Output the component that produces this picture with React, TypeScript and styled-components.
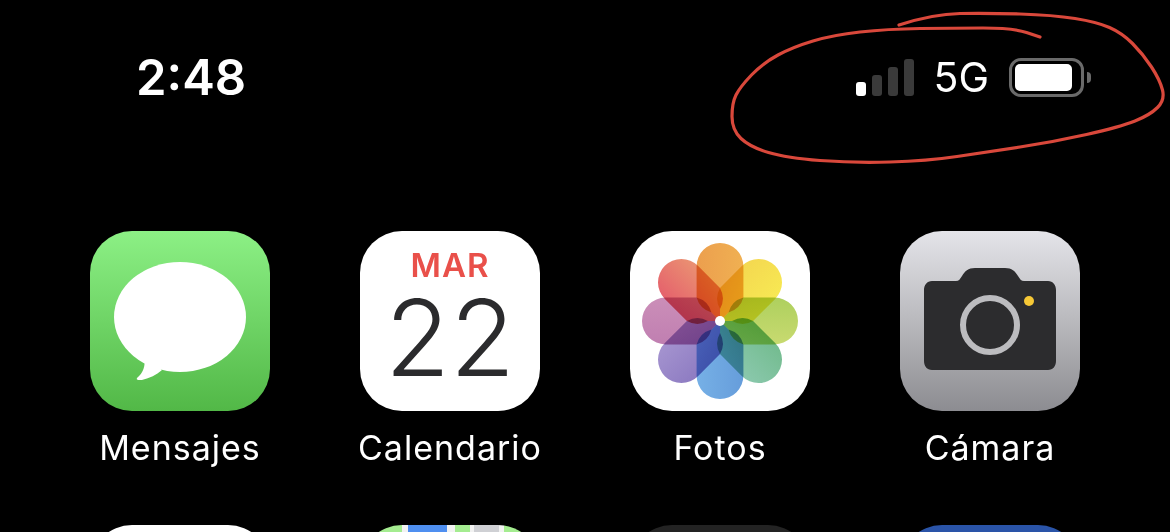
import React from 'react'
import styled, { createGlobalStyle } from 'styled-components'

const GlobalStyle = createGlobalStyle`
  html, body {
    margin: 0;
    padding: 0;
    background: #000;
  }
`

const petals = [
  { angle: 0, from: '#ec9f4e', to: '#f0b052' },
  { angle: 45, from: '#f4d850', to: '#f7e853' },
  { angle: 90, from: '#aed05e', to: '#c8da70' },
  { angle: 135, from: '#74bc90', to: '#8ac8ac' },
  { angle: 180, from: '#669ddb', to: '#76b0e6' },
  { angle: 225, from: '#8e7cc2', to: '#a493cf' },
  { angle: 270, from: '#c07fb1', to: '#cb8eb8' },
  { angle: 315, from: '#e5626c', to: '#ea9172' },
]

const scribble = [
  [899, 25], [933, 14], [987, 13], [1053, 15], [1097, 22], [1122, 33], [1143, 54], [1160, 80],
  [1165, 100], [1150, 115], [1120, 127], [1053, 142], [987, 152], [927, 161], [853, 163],
  [787, 158], [750, 147], [732, 130], [732, 103], [740, 87], [763, 63], [793, 47], [833, 35],
  [887, 29], [953, 28], [1013, 28], [1040, 37],
]

// smooth the hand drawn line through the midpoints
const smoothPath = (pts: number[][]) => {
  let d = `M${pts[0][0]} ${pts[0][1]}`
  for (let i = 1; i < pts.length - 1; i++) {
    const mx = (pts[i][0] + pts[i + 1][0]) / 2
    const my = (pts[i][1] + pts[i + 1][1]) / 2
    d += ` Q${pts[i][0]} ${pts[i][1]} ${mx} ${my}`
  }
  const last = pts[pts.length - 1]
  return `${d} L${last[0]} ${last[1]}`
}

const App: React.FC = () => {
  return (
    <Screen>
      <GlobalStyle />
      <StatusBar>
        <Time>2:48</Time>
        <StatusRight>
          <Signal>
            <Bar $height={14} $active />
            <Bar $height={21} />
            <Bar $height={29} />
            <Bar $height={37} />
          </Signal>
          <Network>5G</Network>
          <Battery>
            <BatteryShell>
              <BatteryLevel />
            </BatteryShell>
            <BatteryNub />
          </Battery>
        </StatusRight>
      </StatusBar>

      <IconGrid>
        <AppCell>
          <MessagesIcon>
            <svg width="180" height="180" viewBox="0 0 180 180">
              <ellipse cx="90" cy="86" rx="66" ry="55" fill="#fff" />
              <path d="M54 126 C56 135 53 142 47 147 C46 149 48 149 52 149 C60 147 66 144 72 139 Z" fill="#fff" />
            </svg>
          </MessagesIcon>
          <Label>Mensajes</Label>
        </AppCell>

        <AppCell>
          <CalendarIcon>
            <Month>MAR</Month>
            <Day>22</Day>
          </CalendarIcon>
          <Label>Calendario</Label>
        </AppCell>

        <AppCell>
          <PhotosIcon>
            <svg width="180" height="180" viewBox="0 0 180 180">
              <defs>
                {petals.map((p) => (
                  <linearGradient key={p.angle} id={`petal-${p.angle}`} gradientUnits="userSpaceOnUse" x1="-23" y1="-40" x2="23" y2="-40">
                    <stop offset="0" stopColor={p.from} />
                    <stop offset="1" stopColor={p.to} />
                  </linearGradient>
                ))}
              </defs>
              <g transform="translate(90 90)">
                {petals.map((p) => (
                  <Petal
                    key={p.angle}
                    transform={`rotate(${p.angle})`}
                    fill={`url(#petal-${p.angle})`}
                    d="M0 0 L-8.5 -8.5 Q-20.2 -11.8 -23.4 -23.4 V-54.6 A23.4 23.4 0 0 1 23.4 -54.6 V-23.4 Q20.2 -11.8 8.5 -8.5 Z"
                  />
                ))}
                <circle r="5" fill="#fff" />
              </g>
            </svg>
          </PhotosIcon>
          <Label>Fotos</Label>
        </AppCell>

        <AppCell>
          <CameraIcon>
            <svg width="180" height="180" viewBox="0 0 180 180">
              <path
                d="M32 50 H56 C59 50 60 48 62 45 C65 40 68 37 75 37 H105 C112 37 115 40 118 45 C120 48 121 50 124 50 H148 C153 50 156 54 156 59 V130 C156 135 153 139 148 139 H32 C27 139 24 135 24 130 V59 C24 54 27 50 32 50 Z"
                fill="#2c2c2e"
              />
              <circle cx="90" cy="94" r="27" fill="none" stroke="#bcbcbf" strokeWidth="6" />
              <circle cx="129" cy="70" r="5" fill="#f6c836" />
            </svg>
          </CameraIcon>
          <Label>Cámara</Label>
        </AppCell>

        <AppCell>
          <PlainIcon $background="#fff" />
        </AppCell>
        <AppCell>
          <PlainIcon $background="linear-gradient(90deg, #a4ec90 0 42px, #f2f2f2 42px 48px, #4f8ff0 48px 87px, #f2f2f2 87px 95px, #a4ec90 95px 110px, #f2f2f2 110px 114px, #cfd0d4 114px 139px, #f2f2f2 139px 144px, #a4ec90 144px)" />
        </AppCell>
        <AppCell>
          <PlainIcon $background="#232323" />
        </AppCell>
        <AppCell>
          <PlainIcon $background="#2a54a8" />
        </AppCell>
      </IconGrid>

      <Scribble width="1170" height="532" viewBox="0 0 1170 532">
        <path d={smoothPath(scribble)} fill="none" stroke="#d9483b" strokeWidth="3.2" strokeLinecap="round" strokeLinejoin="round" />
      </Scribble>
    </Screen>
  )
}

const Screen = styled.div`
  position: relative;
  width: 1170px;
  height: 532px;
  overflow: hidden;
  background: #000;
  color: #fff;
  font-family: Inter, 'Liberation Sans', sans-serif;
`

// status bar
const StatusBar = styled.div`
  display: flex;
  align-items: center;
  justify-content: space-between;
  box-sizing: border-box;
  height: 155px;
  padding: 0 79px 0 136px;
`
const Time = styled.div`
  font-size: 49px;
  line-height: 1;
  font-weight: 600;
`
const StatusRight = styled.div`
  display: flex;
  align-items: center;
  gap: 20px;
`
const Signal = styled.div`
  display: flex;
  align-items: flex-end;
  gap: 6px;
  height: 37px;
  margin-right: -1px;
`
const Bar = styled.div<{ $height: number; $active?: boolean }>`
  width: 10px;
  height: ${(p) => p.$height}px;
  border-radius: 3px;
  background: ${(p) => (p.$active ? '#fff' : '#3a3a3a')};
`
const Network = styled.div`
  font-size: 41px;
  line-height: 1;
  font-weight: 400;
`
const Battery = styled.div`
  display: flex;
  align-items: center;
  gap: 3px;
`
const BatteryShell = styled.div`
  box-sizing: border-box;
  display: flex;
  align-items: center;
  width: 75px;
  height: 39px;
  padding: 0 3px;
  border: 3px solid #6a6a6a;
  border-radius: 12px;
`
const BatteryLevel = styled.div`
  width: 57px;
  height: 27px;
  border-radius: 5px;
  background: #fff;
`
const BatteryNub = styled.div`
  width: 4px;
  height: 11px;
  border-radius: 0 4px 4px 0;
  background: #6a6a6a;
`

// icons
const IconGrid = styled.div`
  display: grid;
  grid-template-columns: repeat(4, 270px);
  row-gap: 57px;
  padding: 76px 0 0 45px;
`
const AppCell = styled.div`
  display: flex;
  flex-direction: column;
  align-items: center;
`
const IconTile = styled.div`
  width: 180px;
  height: 180px;
  flex: none;
  border-radius: 42px;
  overflow: hidden;

  svg {
    display: block;
  }
`
const MessagesIcon = styled(IconTile)`
  background: linear-gradient(180deg, #8cf085 0%, #52b847 100%);
`
const CalendarIcon = styled(IconTile)`
  display: flex;
  flex-direction: column;
  align-items: center;
  background: #fff;
`
const Month = styled.div`
  margin-top: 14px;
  height: 40px;
  font-size: 33px;
  line-height: 40px;
  font-weight: 600;
  letter-spacing: 1px;
  color: #e9504a;
`
const Day = styled.div`
  margin-top: 3px;
  height: 100px;
  font-size: 106px;
  line-height: 100px;
  font-weight: 300;
  color: #2b2b2d;
`
const PhotosIcon = styled(IconTile)`
  background: #fff;
`
const Petal = styled.path`
  mix-blend-mode: multiply;
`
const CameraIcon = styled(IconTile)`
  background: linear-gradient(180deg, #e4e4e9 0%, #b9b9bd 50%, #8c8c91 100%);
`
const PlainIcon = styled(IconTile)<{ $background: string }>`
  background: ${(p) => p.$background};
`
const Label = styled.div`
  margin-top: 17px;
  font-size: 34px;
  line-height: 40px;
  font-weight: 400;
  letter-spacing: 1px;
  white-space: nowrap;
`

const Scribble = styled.svg`
  position: absolute;
  top: 0;
  left: 0;
  pointer-events: none;
`

export default App
